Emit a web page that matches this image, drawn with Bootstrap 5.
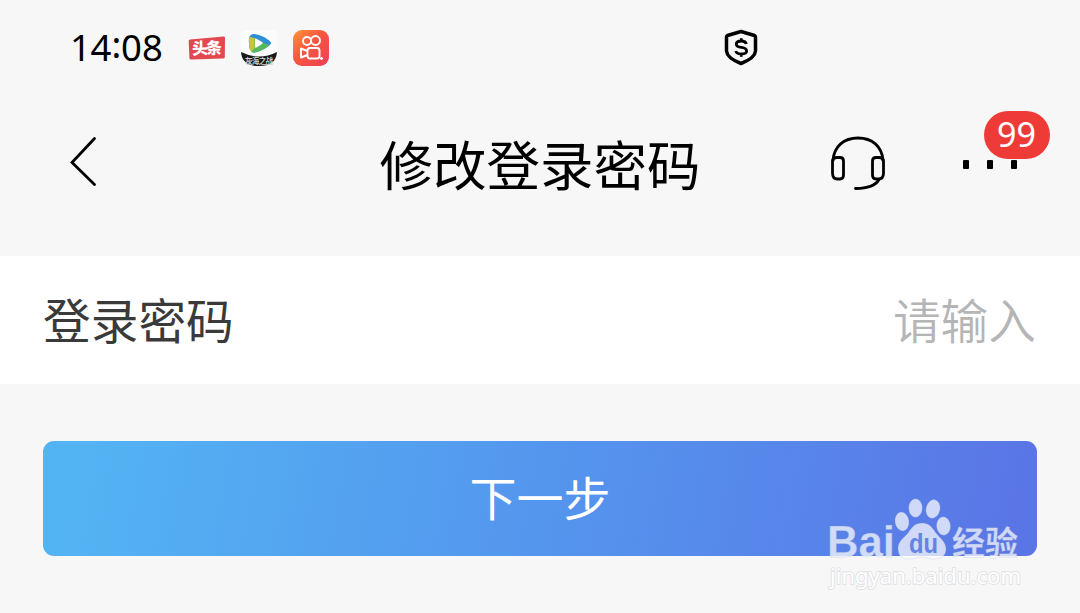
<!DOCTYPE html>
<html lang="zh-CN">

<head>
    <meta charset="UTF-8">
    <meta name="viewport" content="width=device-width, initial-scale=1">
    <title>修改登录密码</title>
    <link href="https://cdn.jsdelivr.net/npm/bootstrap@5.3.0/dist/css/bootstrap.min.css" rel="stylesheet">
    <style>
        body {
            background-color: #f7f7f7;
            font-family: "Noto Sans", "Noto Sans CJK SC", sans-serif;
            height: 613px;
            overflow: hidden;
        }

        svg {
            display: block;
            flex: none;
        }

        svg text {
            font-family: "Noto Sans CJK SC", sans-serif;
        }

        /* Barra de status */
        .status-bar {
            height: 96px;
            padding-left: 70px;
        }

        .clock {
            width: 116px;
            line-height: 1;
        }

        .app-icons {
            gap: 14px;
        }

        .shield {
            margin-left: 393px;
        }

        /* Título */
        .title-bar {
            height: 160px;
            padding: 0 30px;
        }

        .title-bar > div {
            flex: 1 1 0;
        }

        .title-bar h1 {
            font-size: 53.5px;
            font-weight: 400;
            line-height: 64px;
            color: #000;
            padding-bottom: 21px;
        }

        .back {
            padding-bottom: 28px;
        }

        .back svg {
            margin-left: 38px;
        }

        .actions {
            padding-bottom: 27px;
        }

        .more {
            width: 88px;
            height: 54px;
            margin-left: 75px;
        }

        .count {
            top: -24px;
            right: 0;
            width: 66px;
            height: 48px;
            background-color: #ef3b38;
        }

        /* Campo */
        .field {
            height: 128px;
            padding: 2px 44px 0 43px;
            font-size: 47.7px;
            line-height: 1;
            color: #3a3a3a;
        }

        .field .hint {
            color: #b5b5b5;
            font-weight: 350;
        }

        .next-wrap {
            padding: 57px 43px 0;
        }

        .next-wrap .btn {
            height: 115px;
            font-size: 47px;
            line-height: 1;
            color: #fff;
            border: 0;
            border-radius: 11px;
            background: linear-gradient(100deg, #53b4f3 3%, #5496ee 50%, #5a76e6 97%);
        }

        .watermark {
            left: 820px;
            top: 490px;
        }
    </style>
</head>

<body>
    <div class="status-bar d-flex align-items-center">
        <div class="clock">
            <svg width="100" height="56" viewBox="0 0 100 56">
                <text x="0 20.5 41.5 51 72" y="41 41 38 41 41" font-size="36.500" style="font-family:'Noto Sans', sans-serif">14:08</text>
            </svg>
        </div>
        <div class="app-icons d-flex align-items-center">
            <svg width="40" height="38" viewBox="186 29 40 38">
                <path d="M190 39.500L224 36.500Q225 36.500 225 38L224.800 57Q224.700 58.500 223 58.500L191 59.500Q189.500 59.500 189.400 58L188.700 41Q188.700 39.600 190 39.500Z" fill="#e34750"/>
                <text x="192" y="54" font-size="16" font-weight="900" fill="#fff" textLength="30" transform="rotate(-2 207 48)">头条</text>
            </svg>
            <svg width="38" height="38" viewBox="240 29 38 38">
                <path d="M245 30H273Q277 30 277 34V52Q275 66 259 66T241 52V34Q241 30 245 30Z" fill="#fbfcfc"/>
                <path d="M253 34Q248 35 249 43Q249 51 253 52.500Q256 53 264 49Q271 45 271 43Q271 41 264 37Q256 33.500 253 34Z" fill="#2f8fd6"/>
                <path d="M249 38V44Q249.500 51.500 253 52.500Q257 53 264 49L269.500 45.500L263 42.500L255 38Z" fill="#55b85a"/>
                <path d="M250 37Q248.500 39 249 44Q249.500 50 251.500 51.500L254.500 48V38Z" fill="#c9c43d"/>
                <path d="M255 39.500Q255 38 256.500 38.700L262 42Q263.500 43 262 44L256.500 47.500Q255 48.300 255 46.500Z" fill="#fff"/>
                <path d="M241 52Q250 56.500 259 56.500T277 52Q276 66 259 66T241 52Z" fill="#18191d"/>
                <text x="245" y="63.500" font-size="7.500" font-weight="700" fill="#d5d0c4" textLength="28">灰海之战</text>
            </svg>
            <svg width="38" height="38" viewBox="292 29 38 38">
                <defs>
                    <linearGradient id="orange" x1="0" y1="0" x2="1" y2="1">
                        <stop offset="0" stop-color="#fa9638"/>
                        <stop offset=".45" stop-color="#f75640"/>
                        <stop offset="1" stop-color="#ee3f58"/>
                    </linearGradient>
                </defs>
                <rect x="293" y="30" width="36" height="36" rx="9" fill="url(#orange)"/>
                <g fill="none" stroke="#fff" stroke-width="1.900" stroke-linejoin="round">
                    <circle cx="307" cy="41" r="4"/>
                    <circle cx="315.500" cy="40.500" r="4.500"/>
                    <rect x="307.500" y="48" width="12" height="10.500" rx="2.500"/>
                    <path d="M307.500 51L301 48.500V57.500L307.500 55"/>
                    <path d="M320 58.500H323M321.500 57V60" stroke-width="1.300"/>
                </g>
            </svg>
        </div>
        <svg class="shield" width="36" height="40" viewBox="723 28 36 40">
            <path d="M741 31.500L754.500 35.500Q755.500 36 755.500 37V51Q755 58 741 63.500Q727 58 726.500 51V37Q726.500 36 727.500 35.500Z" fill="none" stroke="#000" stroke-width="3.500" stroke-linejoin="round"/>
            <path d="M746.300 44Q745.500 41 741.300 41Q736.300 41 736.300 44.200Q736.300 46.800 741.500 47.400Q746.600 48.200 746.600 51Q746.600 54 741.300 54Q736.500 54 735.800 51M741.300 38.200V41M741.300 54V56.700" fill="none" stroke="#000" stroke-width="2.800"/>
        </svg>
    </div>

    <header class="title-bar d-flex align-items-center">
        <div class="back">
            <svg width="30" height="52" viewBox="68 136 30 52">
                <path d="M94.500 138.500L72 162.500L94.500 184.500" fill="none" stroke="#000" stroke-width="2.800" stroke-linecap="round"/>
            </svg>
        </div>
        <h1 class="m-0">修改登录密码</h1>
        <div class="actions d-flex justify-content-end">
            <svg width="58" height="56" viewBox="829 134 58 56">
                <g fill="none" stroke="#000" stroke-width="2.800" stroke-linecap="round">
                    <path d="M832.800 160C834 145 844 137 858 137S882 145 883.200 160"/>
                    <path d="M832.500 161Q832.500 156.500 837 156.500H840Q843.500 156.500 843.500 160V174Q843.500 178 840 178H837.500Q832.500 178 832.500 172Z"/>
                    <path d="M883.500 161Q883.500 156.500 879 156.500H876Q872.500 156.500 872.500 160V174Q872.500 178 876 178H878.500Q883.500 178 883.500 172Z"/>
                    <path d="M879 178.500Q874 187.500 855.500 187.500"/>
                </g>
            </svg>
            <div class="more position-relative">
                <svg width="60" height="54" viewBox="962 134 60 54">
                    <rect x="963" y="159" width="6" height="9" rx="1"/>
                    <rect x="987" y="159" width="6" height="9" rx="1"/>
                    <rect x="1011" y="159" width="6" height="9" rx="1"/>
                </svg>
                <span class="count position-absolute rounded-pill">
                    <svg width="66" height="48" viewBox="0 0 66 48">
                        <text x="13" y="36" font-size="34.500" fill="#fff" textLength="39" lengthAdjust="spacingAndGlyphs" style="font-family:'Noto Sans', sans-serif">99</text>
                    </svg>
                </span>
            </div>
        </div>
    </header>

    <main>
        <div class="field bg-white d-flex align-items-center justify-content-between">
            <span>登录密码</span>
            <span class="hint">请输入</span>
        </div>
        <div class="next-wrap">
            <button type="button" class="btn w-100">下一步</button>
        </div>
    </main>

    <!-- Marca d'água -->
    <div class="watermark position-absolute">
        <svg width="220" height="108" viewBox="820 490 220 108">
            <g fill="#fff" opacity=".72" stroke="#8d9cc0" stroke-opacity=".35" stroke-width=".8">
                <text x="827" y="557" font-size="43.500" font-weight="700" textLength="68" lengthAdjust="spacingAndGlyphs" style="font-family:'Liberation Sans', sans-serif">Bai</text>
                <ellipse cx="902" cy="521.500" rx="7" ry="9.500" transform="rotate(-8 902 521.500)"/>
                <ellipse cx="915.500" cy="508" rx="6.800" ry="9.300"/>
                <ellipse cx="933" cy="509" rx="7" ry="9.500" transform="rotate(12 933 509)"/>
                <ellipse cx="943.500" cy="526" rx="7" ry="9.300" transform="rotate(-5 943.500 526)"/>
                <path d="M922 523C929 523 932 527 936 533C940 538 946 542 946 549C946 556 941 559 934 559C928 559 926 557 922 557C918 557 914 559 908 559C901 559 898 555 898 548C898 541 904 538 908 533C912 527 915 523 922 523Z"/>
                <text x="952" y="555" font-size="33" font-weight="700" textLength="66" lengthAdjust="spacingAndGlyphs">经验</text>
            </g>
            <text x="909" y="553" font-size="28" font-weight="700" fill="#6384e3" textLength="29" lengthAdjust="spacingAndGlyphs" style="font-family:'Liberation Sans', sans-serif">du</text>
            <text x="830" y="584" font-size="22" fill="#fff" stroke="#dedee3" stroke-width="1.600" paint-order="stroke" textLength="191" lengthAdjust="spacingAndGlyphs" style="font-family:'Noto Sans', sans-serif">jingyan.baidu.com</text>
        </svg>
    </div>

    <script src="https://cdn.jsdelivr.net/npm/bootstrap@5.3.0/dist/js/bootstrap.bundle.min.js"></script>
</body>

</html>
